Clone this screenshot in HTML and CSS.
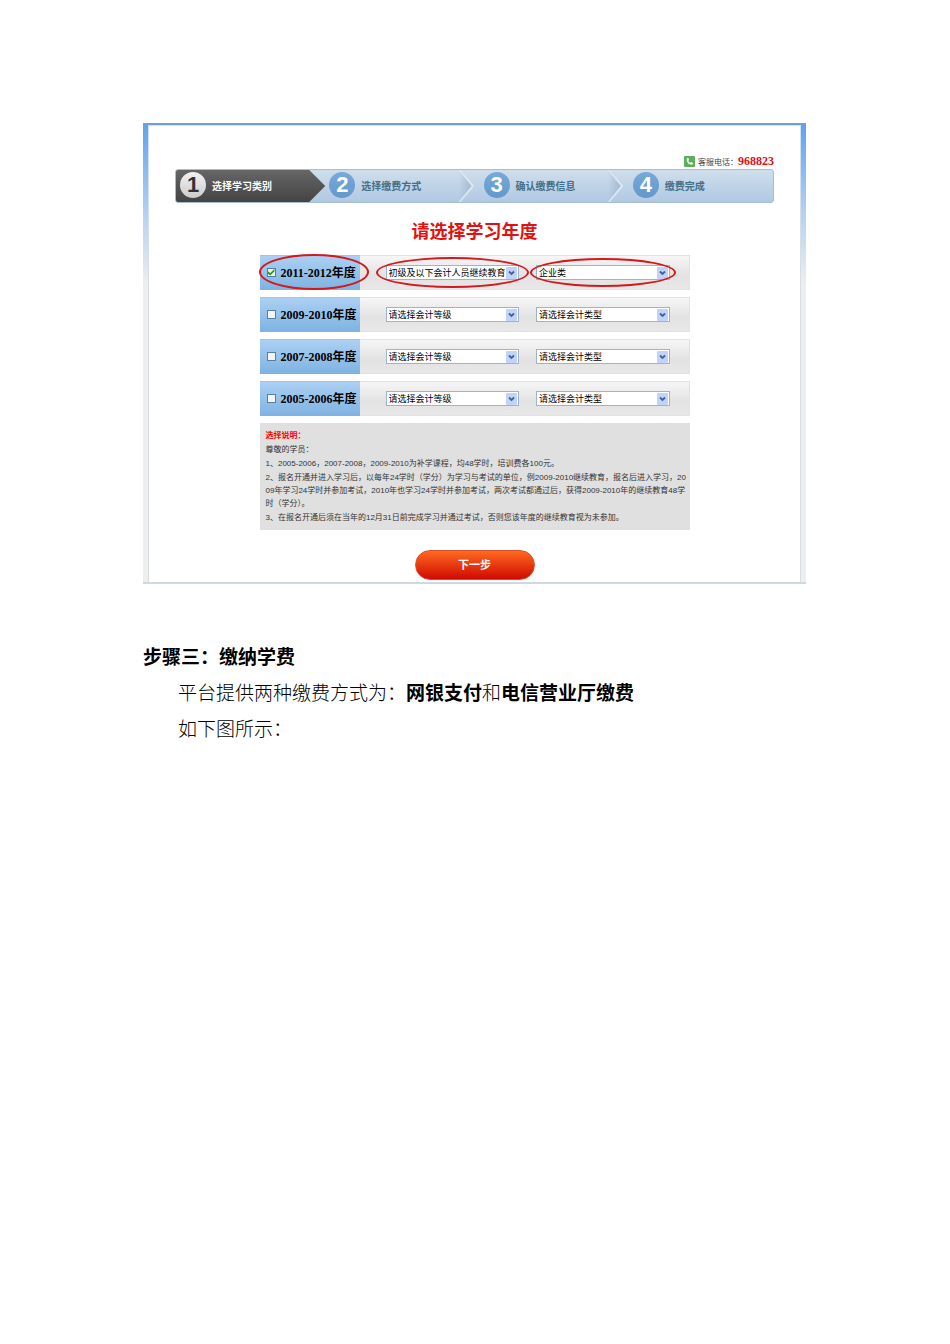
FILE: index.html
```
<!DOCTYPE html>
<html lang="zh-CN">
<head>
    <meta charset="UTF-8">
    <meta name="viewport" content="width=device-width, initial-scale=1.0">
    <title>缴纳学费</title>
    <link rel="stylesheet" href="styles.css">
</head>
<body>
    <div class="page">
        <form class="panel">
            <!-- Hotline -->
            <div class="hotline">
                <svg class="phone-icon" viewBox="0 0 11 11" aria-hidden="true">
                    <rect width="11" height="11" rx="1" fill="#5fae5b"/>
                    <path d="M3 2.2 C1.8 5.6 5 9.4 8.6 8.4 L9 7.2 L7.2 6 L6.2 6.8 C5.2 6.4 4.5 5.6 4.3 4.7 L5.1 3.9 L4.3 2 Z" fill="#fff"/>
                </svg>
                <span>客服电话：</span>
                <strong>968823</strong>
            </div>

            <!-- Steps -->
            <ol class="steps">
                <li class="step current"><span class="num">1</span>选择学习类别</li>
                <li class="step"><span class="num">2</span>选择缴费方式</li>
                <li class="step later"><span class="num">3</span>确认缴费信息</li>
                <li class="step later"><span class="num">4</span>缴费完成</li>
            </ol>

            <h1>请选择学习年度</h1>

            <!-- Years -->
            <div class="years">
                <div class="year-row">
                    <label class="year circled"><input type="checkbox" name="y2011" checked>2011-2012年度</label>
                    <div class="choices">
                        <div class="select circled wide">
                            <select name="level2011" aria-label="会计等级"><option>初级及以下会计人员继续教育</option></select>
                        </div>
                        <div class="select circled">
                            <select name="type2011" aria-label="会计类型"><option>企业类</option></select>
                        </div>
                    </div>
                </div>
                <div class="year-row">
                    <label class="year"><input type="checkbox" name="y2009">2009-2010年度</label>
                    <div class="choices">
                        <div class="select">
                            <select name="level2009" aria-label="会计等级"><option>请选择会计等级</option></select>
                        </div>
                        <div class="select">
                            <select name="type2009" aria-label="会计类型"><option>请选择会计类型</option></select>
                        </div>
                    </div>
                </div>
                <div class="year-row">
                    <label class="year"><input type="checkbox" name="y2007">2007-2008年度</label>
                    <div class="choices">
                        <div class="select">
                            <select name="level2007" aria-label="会计等级"><option>请选择会计等级</option></select>
                        </div>
                        <div class="select">
                            <select name="type2007" aria-label="会计类型"><option>请选择会计类型</option></select>
                        </div>
                    </div>
                </div>
                <div class="year-row">
                    <label class="year"><input type="checkbox" name="y2005">2005-2006年度</label>
                    <div class="choices">
                        <div class="select">
                            <select name="level2005" aria-label="会计等级"><option>请选择会计等级</option></select>
                        </div>
                        <div class="select">
                            <select name="type2005" aria-label="会计类型"><option>请选择会计类型</option></select>
                        </div>
                    </div>
                </div>

                <div class="notes">
                    <h2>选择说明：</h2>
                    <p>尊敬的学员：</p>
                    <p>1、2005-2006，2007-2008，2009-2010为补学课程，均48学时，培训费各100元。</p>
                    <p>2、报名开通并进入学习后，以每年24学时（学分）为学习与考试的单位，例2009-2010继续教育，报名后进入学习，20<br>09年学习24学时并参加考试，2010年也学习24学时并参加考试，两次考试都通过后，获得2009-2010年的继续教育48学<br>时（学分）。</p>
                    <p>3、在报名开通后须在当年的12月31日前完成学习并通过考试，否则您该年度的继续教育视为未参加。</p>
                </div>
            </div>

            <button type="button" class="next">下一步</button>
        </form>

        <!-- Step three -->
        <div class="guide">
            <h2>步骤三：缴纳学费</h2>
            <p>平台提供两种缴费方式为：<strong>网银支付</strong>和<strong>电信营业厅缴费</strong></p>
            <p>如下图所示：</p>
        </div>
    </div>
</body>
</html>
```

FILE: styles.css
```
* {
    box-sizing: border-box;
}
body {
    margin: 0;
    background: #fff;
    color: #000;
    font-family: "Liberation Sans", "Noto Sans CJK SC", sans-serif;
}
h1, h2, p, ol {
    margin: 0;
    padding: 0;
}
.page {
    padding: 123px 144px 60px 143px;
}

/* Panel */
.panel {
    display: flex;
    flex-direction: column;
    padding: 30px 32px 2px;
    border-top: 2px solid #6f9fd4;
    border-bottom: 2px solid #ccd9de;
    background:
        linear-gradient(to bottom, #5fa3ee, #b5d2f2 90px, #eee 160px) left / 5px 100% no-repeat,
        linear-gradient(to bottom, #5fa3ee, #b5d2f2 90px, #eee 160px) right / 5px 100% no-repeat,
        linear-gradient(#cfe3fb, #cfe3fb) top / 100% 1px no-repeat,
        linear-gradient(#cfe3fb, #d8dde2 160px) left / 6px 100% no-repeat,
        linear-gradient(#cfe3fb, #d8dde2 160px) right / 6px 100% no-repeat,
        #fff;
}
.hotline {
    display: flex;
    justify-content: flex-end;
    align-items: center;
    height: 14px;
    padding-bottom: 2px;
    font-size: 8px;
    color: #444;
}
.phone-icon {
    width: 11px;
    height: 11px;
    margin-right: 3px;
}
.hotline strong {
    font: bold 12px "Liberation Serif", serif;
    color: #e01010;
}

/* Steps */
.steps {
    display: flex;
    height: 34px;
    border: 1px solid #a9bdd2;
    border-radius: 3px;
    background: linear-gradient(#cfdeeb, #b0c9e3);
    list-style: none;
    overflow: hidden;
}
.step {
    position: relative;
    width: 25%;
    display: flex;
    align-items: center;
    gap: 6px;
    padding: 0 0 2px 4px;
    color: #436f88;
    font-size: 10px;
    font-weight: bold;
}
.step.later {
    padding-left: 9px;
}
.step.current {
    background: linear-gradient(#666, #444);
    clip-path: polygon(0 0, calc(100% - 16px) 0, 100% 50%, calc(100% - 16px) 100%, 0 100%);
    color: #fff;
}
/* chevron between two steps: shadow, then light edge */
.step:not(.current):not(:last-child)::before,
.step:not(.current):not(:last-child)::after {
    content: "";
    position: absolute;
    top: 0;
    right: 0;
    width: 16px;
    height: 100%;
}
.step:not(.current):not(:last-child)::before {
    background: linear-gradient(to right, rgba(140, 165, 192, 0), rgba(140, 165, 192, 0.7));
    clip-path: polygon(0 0, 100% 50%, 0 100%);
}
.step:not(.current):not(:last-child)::after {
    background: #dae6f1;
    clip-path: polygon(0 0, 2px 0, 100% 50%, 2px 100%, 0 100%, 13px 50%);
}
.num {
    width: 26px;
    height: 26px;
    border-radius: 50%;
    background: linear-gradient(#78a9da, #6398cb);
    color: #fff;
    font-size: 22px;
    line-height: 26px;
    text-align: center;
}
.current .num {
    background: linear-gradient(#f2f2f2, #ccc);
    color: #333;
}

h1 {
    margin: 17px 0 10px;
    color: #e01212;
    font-size: 18px;
    line-height: 25px;
    text-align: center;
}

/* Years */
.years {
    display: flex;
    flex-direction: column;
    gap: 7px;
    width: 430px;
    max-width: 100%;
    align-self: center;
}
.year-row {
    display: flex;
    height: 35px;
}
.year {
    position: relative;
    display: flex;
    align-items: center;
    gap: 5px;
    width: 100px;
    padding: 0 0 2px 7px;
    border-top: 1px solid #9cc6ec;
    background: linear-gradient(#abd0f3, #7fb2e2);
    font: bold 12px "Liberation Serif", "Noto Sans CJK SC", serif;
    white-space: nowrap;
}
.year input {
    appearance: none;
    flex: none;
    width: 9px;
    height: 9px;
    margin: 0;
    border: 1px solid #517fa8;
    background: #f4f4f2;
}
.year input:checked::after {
    content: "";
    display: block;
    height: 7px;
    background: #21a121;
    clip-path: polygon(0 35%, 40% 65%, 100% 5%, 100% 40%, 40% 100%, 0 70%);
}
.choices {
    flex: 1;
    display: flex;
    align-items: center;
    gap: 17px;
    padding: 0 19px 0 26px;
    border: 1px solid #e2e2e2;
    border-left: 0;
    background: linear-gradient(#f6f6f6, #e2e2e2 60%, #e8e8e8);
}
.select {
    position: relative;
    flex: 1;
    display: flex;
}
.select select {
    appearance: none;
    width: 100%;
    height: 15px;
    padding: 0 0 0 2px;
    border: 1px solid #9db4d0;
    border-radius: 0;
    background:
        url("data:image/svg+xml,%3Csvg xmlns='http://www.w3.org/2000/svg' viewBox='0 0 11 12'%3E%3Crect width='11' height='12' rx='1' fill='%23c1d2fb'/%3E%3Cpath d='M3 4.5 L5.5 7 L8 4.5' fill='none' stroke='%2346618f' stroke-width='1.8'/%3E%3C/svg%3E") right 1px center / 11px 12px no-repeat,
        #fff;
    color: #000;
    font: 9px/13px "Noto Sans CJK SC", sans-serif;
}

/* Red pen marks */
.circled::after {
    content: "";
    position: absolute;
    inset: -7px -6px;
    border: 2px solid #d4191c;
    border-radius: 50%;
    pointer-events: none;
}
.circled.wide::after {
    inset: -8px -10px;
}
.year.circled {
    z-index: 1;
}
.year.circled::after {
    inset: -2px -9px 0 -1px;
}

/* Notes */
.notes {
    padding: 6px 0 6px 6px;
    background: #e0e0e0;
    color: #333;
    font-size: 8px;
    line-height: 13px;
    white-space: nowrap;
}
.notes h2 {
    color: #f00;
    font-size: 8px;
}
.notes p {
    margin-top: 1px;
}

.next {
    align-self: center;
    width: 120px;
    height: 30px;
    margin-top: 20px;
    padding: 0 0 2px;
    border: 1px solid #d8502a;
    border-radius: 15px;
    background: linear-gradient(#ff6a20, #cf0a00);
    color: #fff;
    font: bold 11px "Noto Sans CJK SC", sans-serif;
}

/* Guide text */
.guide {
    margin-top: 54px;
    font-family: "Noto Sans CJK SC", sans-serif;
    font-size: 19px;
    font-weight: 300;
    line-height: 36px;
}
.guide h2 {
    font-size: 19px;
}
.guide strong {
    font-weight: bold;
}
.guide p {
    padding-left: 35px;
}
```
